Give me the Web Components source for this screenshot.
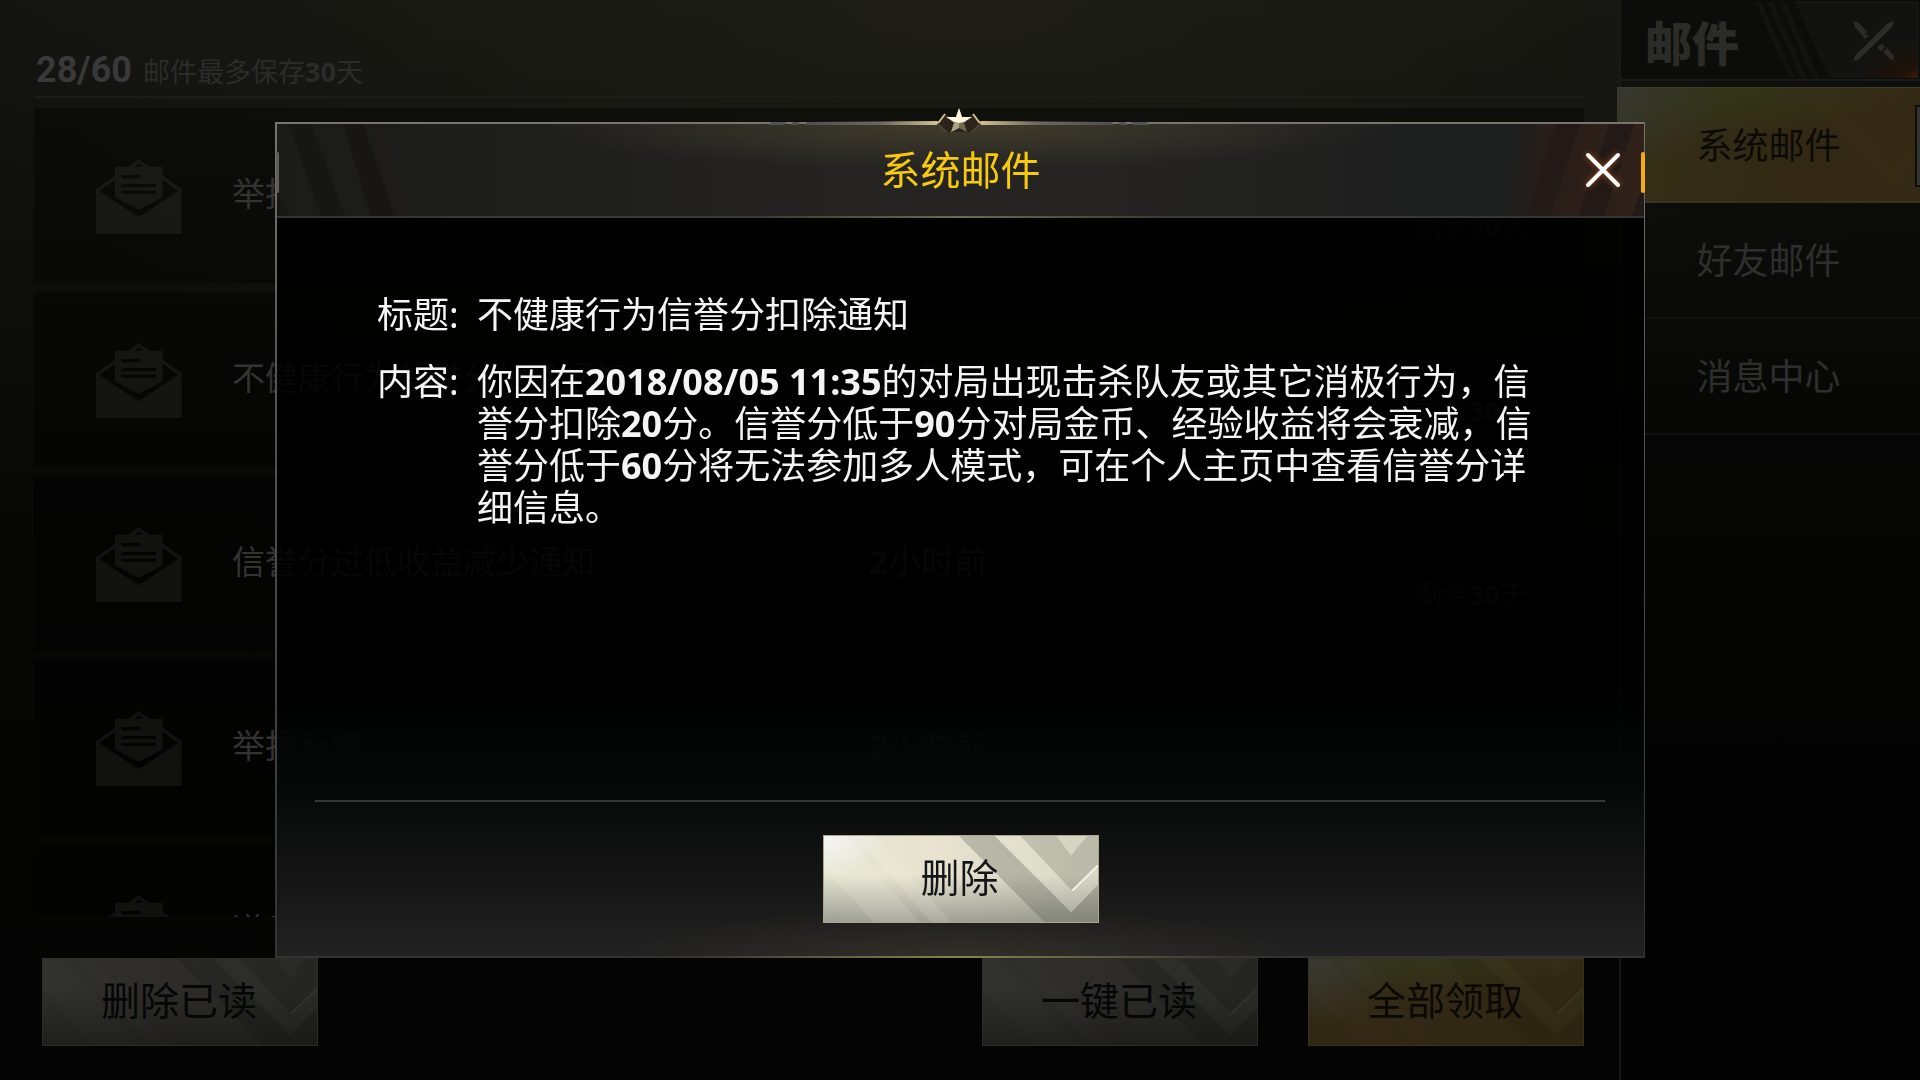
<!DOCTYPE html>
<html lang="zh-CN">
<head>
<meta charset="utf-8">
<title>系统邮件</title>
<style>
    html, body {
        height: 100%;
        margin: 0;
    }
    body {
        background: #040404;
        font-family: "Noto Sans", "Noto Sans CJK SC", sans-serif;
        overflow: hidden;
    }
</style>
</head>
<body>

<mail-page>
    <span slot="count">28/60</span>
    <span slot="hint">邮件最多保存<b>30</b>天</span>

    <mail-row>举报反馈<span slot="time"><b>2</b>小时前</span><span slot="left">剩余<b>30</b>天</span></mail-row>
    <mail-row>不健康行为信誉分扣除通知<span slot="time"><b>2</b>小时前</span><span slot="left">剩余<b>30</b>天</span></mail-row>
    <mail-row>信誉分过低收益减少通知<span slot="time"><b>2</b>小时前</span><span slot="left">剩余<b>30</b>天</span></mail-row>
    <mail-row>举报反馈<span slot="time"><b>2</b>小时前</span><span slot="left">剩余<b>30</b>天</span></mail-row>
    <mail-row>道具</mail-row>

    <skin-button slot="actions" tone="dim">删除已读</skin-button>
    <skin-button slot="actions" tone="dim" class="push">一键已读</skin-button>
    <skin-button slot="actions" tone="gold">全部领取</skin-button>

    <span slot="heading">邮件</span>
    <side-tab slot="tabs" active>系统邮件</side-tab>
    <side-tab slot="tabs">好友邮件</side-tab>
    <side-tab slot="tabs">消息中心</side-tab>
</mail-page>

<mail-dialog>
    <span slot="title">系统邮件</span>
    <span slot="subject">不健康行为信誉分扣除通知</span>
    <span slot="content">你因在<b>2018/08/05 11:35</b>的对局出现击杀队友或其它消极行为，信誉分扣除<b>20</b>分。信誉分低于<b>90</b>分对局金币、经验收益将会衰减，信誉分低于<b>60</b>分将无法参加多人模式，可在个人主页中查看信誉分详细信息。</span>
    <skin-button slot="actions">删除</skin-button>
</mail-dialog>

<script>
class MailPage extends HTMLElement {
    constructor() {
        super();
        this.attachShadow({mode: 'open'});
        this.shadowRoot.innerHTML = `
            <style>
                :host {
                    display: grid;
                    grid-template-columns: 1fr 301px;
                    grid-template-rows: minmax(0, 1fr);
                    height: 100vh;
                    background:
                        radial-gradient(ellipse 1100px 420px at 50% 0, rgba(44, 42, 32, .42), transparent),
                        linear-gradient(#131410, #0f100d 20%, #080807 45%, #050504 70%, #040404);
                }
                main {
                    display: flex;
                    flex-direction: column;
                    min-width: 0;
                    padding: 0 35px 34px 34px;
                }
                header {
                    display: grid;
                    grid-template-columns: 107px 1fr;
                    align-items: center;
                    box-sizing: border-box;
                    height: 98px;
                    padding: 44px 0 0 2px;
                    border-bottom: 2px solid #1c1d18;
                    color: #2b2b29;
                    font-size: 27px;
                }
                .count {
                    font: bold 36px Roboto, sans-serif;
                    color: #393939;
                }
                .list {
                    display: flex;
                    flex-direction: column;
                    gap: 9px;
                    flex: 1;
                    min-height: 0;
                    margin: 10px 0 41px;
                    overflow: hidden;
                }
                footer {
                    display: flex;
                    gap: 50px;
                    padding-left: 8px;
                }
                ::slotted(.push) {
                    margin-left: auto;
                }
                aside {
                    border-left: 2px solid #181917;
                    background: rgba(0, 0, 0, .25);
                    position: relative;
                }
                .heading {
                    display: flex;
                    justify-content: space-between;
                    box-sizing: border-box;
                    height: 81px;
                    padding-left: 24px;
                    border-bottom: 2px solid #1a1b18;
                    background: #0c0d0a;
                }
                h1 {
                    margin: 0;
                    font-size: 47px;
                    font-weight: 900;
                    line-height: 86px;
                    color: #2b2c28;
                }
                .leave {
                    padding: 0;
                    border: 0;
                    background: none;
                }
                .leave svg {
                    display: block;
                }
                nav {
                    margin: 6px 0 0 -4px;
                }
                .knob {
                    position: absolute;
                    right: 0;
                    top: 105px;
                    width: 3px;
                    height: 78px;
                    border: 2px solid #0d0d0b;
                    border-right: 0;
                    background: #35352f;
                }
            </style>
            <main>
                <header>
                    <span class="count"><slot name="count"></slot></span>
                    <slot name="hint"></slot>
                </header>
                <div class="list"><slot></slot></div>
                <footer><slot name="actions"></slot></footer>
            </main>
            <aside>
                <div class="heading">
                    <h1><slot name="heading"></slot></h1>
                    <button class="leave" aria-label="关闭邮件">
                        <svg width="170" height="79" viewBox="0 0 170 79">
                            <defs>
                                <radialGradient id="ember" cx="1" cy="1" r=".5">
                                    <stop offset="0" stop-color="#45180a"/>
                                    <stop offset=".25" stop-color="#20120b"/>
                                    <stop offset="1" stop-color="#121310"/>
                                </radialGradient>
                            </defs>
                            <path d="M5 2h6l34 76h-6zM17 2h6l34 76h-6zM29 2h7l33 76h-7z" fill="#121310"/>
                            <path d="M45 2h123v76H79z" fill="url(#ember)"/>
                            <path d="M45 2h123v76" fill="none" stroke="#1b1c19"/>
                            <path d="M144 21l-6 2-33 33-2 5 5-1 34-33z" fill="#2c2d28"/>
                            <path d="M103 21l6 2 8 9-4 4-8-9zM115 34l4 2-4 3-2-2zM128 46l4-2 3 3-4 4-3-2zM133 52l4-4 7 8v4l-4-1z" fill="#2d2b2a"/>
                        </svg>
                    </button>
                </div>
                <nav><slot name="tabs"></slot></nav>
                <div class="knob"></div>
            </aside>
        `;
    }
}

class MailRow extends HTMLElement {
    constructor() {
        super();
        this.attachShadow({mode: 'open'});
        this.shadowRoot.innerHTML = `
            <style>
                :host {
                    display: grid;
                    grid-template-columns: 136px 637px 1fr auto;
                    align-items: center;
                    flex: none;
                    box-sizing: border-box;
                    height: 175px;
                    padding: 0 57px 4px 62px;
                    background: rgba(0, 0, 0, .38);
                    color: #333;
                    font-size: 33px;
                    line-height: 48px;
                }
                .left {
                    padding-top: 66px;
                    color: #262626;
                    font-size: 27px;
                }
                svg {
                    display: block;
                    margin-top: 6px;
                }
            </style>
            <svg width="86" height="75" viewBox="0 0 258 225" fill="#fff" fill-opacity=".06" fill-rule="evenodd">
                <path d="M0 90L57 50V23H96L128 0L160 23H200V50L257 90V225H0Z
                    M10 96L128 175L247 96L200 62V115L128 152L57 115V62Z
                    M117 23H140L128 13Z
                    M77 48V58H134V48Z M77 75V84H180V75Z M77 95V104H180V95Z"/>
            </svg>
            <span><slot></slot></span>
            <span><slot name="time"></slot></span>
            <span class="left"><slot name="left"></slot></span>
        `;
    }
}

class SideTab extends HTMLElement {
    constructor() {
        super();
        this.attachShadow({mode: 'open'});
        this.shadowRoot.innerHTML = `
            <style>
                :host {
                    display: block;
                    color: #2e2e2e;
                }
                button {
                    display: block;
                    box-sizing: border-box;
                    width: 100%;
                    height: 116px;
                    padding: 0;
                    border: 0;
                    border-bottom: 2px solid #11110f;
                    background: none;
                    color: inherit;
                    font: 36px/116px "Noto Sans", "Noto Sans CJK SC", sans-serif;
                }
                svg {
                    display: none;
                }
                :host([active]) {
                    color: #0b0b06;
                }
                :host([active]) button {
                    position: relative;
                    border-top: 1px solid #3b3c2a;
                    border-bottom-color: #34331b;
                    background:
                        radial-gradient(ellipse 110px 80px at 0 0, #373831, transparent),
                        radial-gradient(ellipse 180px 50px at 35% 0, #333619, transparent),
                        linear-gradient(100deg, #343018, #322814 60%, #342914);
                }
                :host([active]) svg {
                    display: block;
                    position: absolute;
                    inset: 0;
                    width: 100%;
                    height: 100%;
                }
                span {
                    position: relative;
                }
            </style>
            <button>
                <svg viewBox="0 0 303 115" preserveAspectRatio="none" fill="#42351a" fill-opacity=".15">
                    <path d="M180 0h34l63 78 26-32v26l-26 34z"/>
                    <path d="M20 0h24l70 115H90z" fill-opacity=".1"/>
                    <path d="M256 0h34l-16 22z"/>
                </svg>
                <span><slot></slot></span>
            </button>
        `;
    }
}

class SkinButton extends HTMLElement {
    constructor() {
        super();
        this.attachShadow({mode: 'open'});
        this.shadowRoot.innerHTML = `
            <style>
                :host {
                    display: block;
                    --ink: #14171a;
                    --edge: #b0a48c;
                    --shade: rgba(70, 72, 66, .26);
                    --shine: rgba(255, 255, 245, .12);
                    --glint: #f4f4ee;
                    --face:
                        radial-gradient(ellipse 60px 40px at 0 0, #f4f4f8, transparent),
                        linear-gradient(transparent 45%, rgba(112, 114, 110, .6)),
                        linear-gradient(90deg, #e4e5d0, #e9e3d0 40%, #d3d3c0);
                }
                :host([tone="dim"]) {
                    --ink: #050606;
                    --edge: #2d2c26;
                    --shade: rgba(10, 12, 12, .15);
                    --shine: rgba(255, 255, 245, .01);
                    --glint: #32332f;
                    --face:
                        linear-gradient(transparent 35%, rgba(24, 24, 24, .7)),
                        linear-gradient(90deg, #2f2f2c, #2d2c28 50%, #292a25);
                }
                :host([tone="gold"]) {
                    --ink: #0b0904;
                    --edge: #37331c;
                    --shade: rgba(24, 16, 4, .1);
                    --shine: rgba(255, 255, 200, .01);
                    --glint: #37351c;
                    --face:
                        radial-gradient(ellipse 100px 66px at 0 0, #363732, transparent),
                        radial-gradient(ellipse 150px 36px at 45% 0, #33351a, transparent),
                        linear-gradient(#342c16, #302614);
                }
                button {
                    display: block;
                    position: relative;
                    box-sizing: border-box;
                    width: 276px;
                    height: 88px;
                    padding: 0 2px 4px 0;
                    border: 1px solid var(--edge);
                    background: var(--face);
                    color: var(--ink);
                    font: 39px/80px "Noto Sans", "Noto Sans CJK SC", sans-serif;
                }
                svg {
                    position: absolute;
                    inset: 0;
                    width: 100%;
                    height: 100%;
                }
                .shade { fill: var(--shade); }
                .shine { fill: var(--shine); }
                .glint { fill: none; stroke: var(--glint); stroke-width: 2; }
                span { position: relative; }
            </style>
            <button>
                <svg viewBox="0 0 276 88" preserveAspectRatio="none">
                    <path class="shine" d="M0 0h20l76 88H50L0 32zM32 0h20l76 88h-20z"/>
                    <path class="shade" d="M136 0h36l77 78 27-28v38h-54z"/>
                    <path class="shine" d="M172 0h26l52 56 26-26v20l-27 28z"/>
                    <path class="shade" fill-opacity=".7" d="M198 0h36l15 20 16-20h11v30l-26 26z"/>
                    <path class="glint" d="M250 56l26-26"/>
                </svg>
                <span><slot></slot></span>
            </button>
        `;
    }
}

class MailDialog extends HTMLElement {
    constructor() {
        super();
        this.attachShadow({mode: 'open'});
        this.shadowRoot.innerHTML = `
            <style>
                :host {
                    position: fixed;
                    inset: 0;
                    display: grid;
                    box-sizing: border-box;
                    padding: 122px 275px;
                }
                .panel {
                    position: relative;
                    display: flex;
                    flex-direction: column;
                    border: 2px solid;
                    border-right-width: 1px;
                    border-image: linear-gradient(#77756c, #555 30%, #333) 1;
                    background:
                        radial-gradient(ellipse 340px 50px at 50% 100%, rgba(66, 58, 46, .5), transparent),
                        linear-gradient(transparent 68%, #070909 80%, #141414 90%, #222),
                        rgba(0, 0, 0, .88);
                }
                header {
                    position: relative;
                    display: grid;
                    grid-template-columns: 1fr auto 1fr;
                    align-items: center;
                    box-sizing: border-box;
                    height: 94px;
                    border-bottom: 2px solid;
                    border-image: linear-gradient(90deg, #353535, #3a3a36 35%, #6c6b4c 50%, #3a3a36 65%, #353535) 1;
                    background:
                        radial-gradient(ellipse 430px 46px at 50% 0, rgba(84, 76, 50, .6), transparent),
                        linear-gradient(90deg, #1b1c18, #1e1e1d 20%, #252422 42%, #252422 60%, #1d1e1e 85%);
                }
                .stripes {
                    position: absolute;
                    top: 0;
                    height: 100%;
                }
                .stripes.right {
                    right: 0;
                }
                h2 {
                    grid-column: 2;
                    margin: 0;
                    font-size: 40px;
                    font-weight: 400;
                    line-height: 56px;
                    color: #f7cb0b;
                }
                .close {
                    position: relative;
                    justify-self: end;
                    margin-right: 19px;
                    padding: 4px;
                    border: 0;
                    background: none;
                }
                .close svg {
                    display: block;
                    filter: drop-shadow(0 0 3px #a04a20);
                }
                .crest {
                    position: absolute;
                    left: calc(50% - 192px);
                    top: -14px;
                    overflow: visible;
                }
                .mark {
                    position: absolute;
                    top: 28px;
                    width: 4px;
                    height: 41px;
                    border-radius: 2px;
                }
                .mark.gray {
                    left: -1px;
                    width: 3px;
                    background: #5e5e5c;
                }
                .mark.amber {
                    right: -1px;
                    background: #f6ab12;
                }
                dl {
                    display: grid;
                    grid-template-columns: 100px 1fr;
                    align-content: start;
                    gap: 25px 0;
                    flex: 1;
                    margin: 0 39px 0 38px;
                    padding: 76px 60px 0 62px;
                    border-bottom: 2px solid #343636;
                    color: #f4f4f4;
                    font-size: 36px;
                    line-height: 42px;
                }
                dd {
                    margin: 0;
                }
                footer {
                    display: flex;
                    justify-content: center;
                    padding: 33px 0;
                }
                .glow {
                    position: absolute;
                    left: 30%;
                    right: 30%;
                    bottom: -2px;
                    height: 2px;
                    background: linear-gradient(90deg, transparent, #8a8250, transparent);
                }
            </style>
            <section class="panel" role="dialog" aria-labelledby="title">
                <header>
                    <svg class="stripes" width="150" height="92" viewBox="0 0 150 92">
                        <path d="M12 0h22l34 92H44zM0 64l12 28H0z" fill="#161613"/>
                        <path d="M66 0h20l32 92H94z" fill="#171613"/>
                        <path d="M92 0h14l26 92h-16z" fill="#201a17" opacity=".5"/>
                    </svg>
                    <svg class="stripes right" width="150" height="92" viewBox="0 0 150 92">
                        <defs>
                            <linearGradient id="rust">
                                <stop offset="0" stop-color="#2a1e18" stop-opacity="0"/>
                                <stop offset=".4" stop-color="#2a1e18"/>
                                <stop offset="1" stop-color="#30211a"/>
                            </linearGradient>
                        </defs>
                        <path d="M30 0h120v92H8z" fill="url(#rust)"/>
                        <path d="M62 0h24L56 92H32zM116 0h24l-30 92H84zM150 60v32h-12z" fill="#231916"/>
                    </svg>
                    <h2 id="title"><slot name="title"></slot></h2>
                    <button class="close" aria-label="关闭">
                        <svg width="36" height="36" viewBox="0 0 36 36" stroke="#fff" stroke-width="4" stroke-linecap="round">
                            <path d="M3 3l30 30M33 3L3 33"/>
                        </svg>
                    </button>
                    <i class="mark gray"></i>
                    <i class="mark amber"></i>
                </header>
                <svg class="crest" width="380" height="26" viewBox="0 0 380 26">
                    <defs>
                        <linearGradient id="ray" gradientUnits="userSpaceOnUse" x1="35" x2="345">
                            <stop offset="0" stop-color="#4d4e50"/>
                            <stop offset=".25" stop-color="#6c6960"/>
                            <stop offset=".46" stop-color="#e2cf98"/>
                            <stop offset=".54" stop-color="#e2cf98"/>
                            <stop offset=".75" stop-color="#6c6960"/>
                            <stop offset="1" stop-color="#4d4e50"/>
                        </linearGradient>
                    </defs>
                    <path d="M2 12h16l-4 3H0zM24 12h7l-3 3h-6zM349 12h7l3 3h-7zM362 12h16l2 3h-15z" fill="#505358"/>
                    <path d="M38 12L168 11 168 15 35 15zM342 12L212 11 212 15 345 15z" fill="url(#ray)"/>
                    <path d="M176 4l-7 9 9 9h24l9-9-7-9-7 4h-14z" fill="#2c231b"/>
                    <path d="M167 13l3-1 6-8M213 13l-3-1-6-8" fill="none" stroke="#d2c294" stroke-width="2"/>
                    <path d="M170 15l8 7M210 15l-8 7" fill="none" stroke="#5e5442"/>
                    <path d="M190-2l3 9 9 0-7 6 3 9-8-4-8 4 3-9-7-6 9 0z" fill="#6d6a50"/>
                    <path d="M190-2l3 9 10 0-8 5-5 1-5-1-8-5 10 0z" fill="#fff4dc"/>
                    <path d="M190 13v5l-8 4 3-9z" fill="#a8a67e"/>
                </svg>
                <dl>
                    <dt>标题:</dt>
                    <dd><slot name="subject"></slot></dd>
                    <dt>内容:</dt>
                    <dd><slot name="content"></slot></dd>
                </dl>
                <footer><slot name="actions"></slot></footer>
                <div class="glow"></div>
            </section>
        `;
    }
}

customElements.define('mail-page', MailPage);
customElements.define('mail-row', MailRow);
customElements.define('side-tab', SideTab);
customElements.define('skin-button', SkinButton);
customElements.define('mail-dialog', MailDialog);
</script>
</body>
</html>
